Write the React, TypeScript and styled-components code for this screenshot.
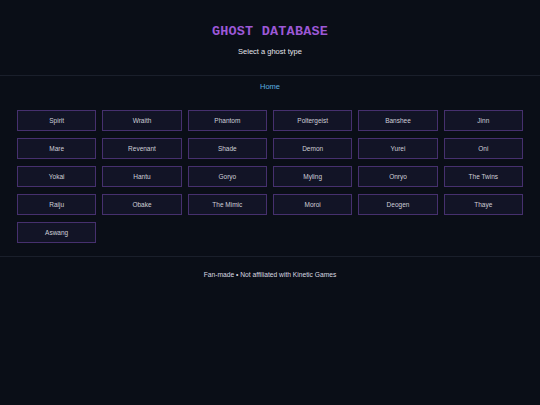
import React from "react";
import styled, { createGlobalStyle } from "styled-components";

const GlobalStyle = createGlobalStyle`
  html, body {
    margin: 0;
    padding: 0;
    background: #0a0e17;
  }
  body {
    font-family: "Liberation Sans", Arial, sans-serif;
    color: #d8d8e0;
  }
`;

const Page = styled.div`
  width: 540px;
  min-height: 405px;
  background: #0a0e17;
  display: flex;
  flex-direction: column;
`;

const Header = styled.header`
  display: flex;
  flex-direction: column;
  align-items: center;
  padding: 24px 0 19px;
  border-bottom: 1px solid #1a1f2b;
`;

const Title = styled.h1`
  margin: 0;
  font-family: "Liberation Mono", "DejaVu Sans Mono", monospace;
  font-size: 13.5px;
  font-weight: bold;
  color: #9c58d6;
  letter-spacing: 0.2px;
`;

const Subtitle = styled.p`
  margin: 8px 0 0;
  font-size: 7.5px;
  color: #e4e4ea;
`;

const Nav = styled.nav`
  display: flex;
  justify-content: center;
  padding: 6px 0 0;
`;

const NavLink = styled.a`
  font-size: 7.5px;
  color: #5aaee0;
  text-decoration: none;
`;

const Grid = styled.div`
  display: grid;
  grid-template-columns: repeat(6, 1fr);
  column-gap: 6px;
  row-gap: 7px;
  padding: 19px 17px 13px;
  border-bottom: 1px solid #1a1f2b;
`;

const GhostButton = styled.button`
  height: 21px;
  padding: 0;
  background: #121426;
  border: 1px solid #46306e;
  color: #cfcfd8;
  font-family: "Liberation Sans", Arial, sans-serif;
  font-size: 6.5px;
  cursor: pointer;
`;

const Footer = styled.footer`
  display: flex;
  justify-content: center;
  padding: 14px 0;
  font-size: 6.7px;
  color: #d8d8e0;
`;

const ghosts = [
  "Spirit", "Wraith", "Phantom", "Poltergeist", "Banshee", "Jinn",
  "Mare", "Revenant", "Shade", "Demon", "Yurei", "Oni",
  "Yokai", "Hantu", "Goryo", "Myling", "Onryo", "The Twins",
  "Raiju", "Obake", "The Mimic", "Moroi", "Deogen", "Thaye",
  "Aswang",
];

const App = () => {
  return (
    <Page>
      <GlobalStyle />
      <Header>
        <Title>GHOST DATABASE</Title>
        <Subtitle>Select a ghost type</Subtitle>
      </Header>
      <Nav>
        <NavLink href="#">Home</NavLink>
      </Nav>
      <Grid>
        {ghosts.map((g) => (
          <GhostButton key={g}>{g}</GhostButton>
        ))}
      </Grid>
      <Footer>Fan-made • Not affiliated with Kinetic Games</Footer>
    </Page>
  );
};

export default App;
